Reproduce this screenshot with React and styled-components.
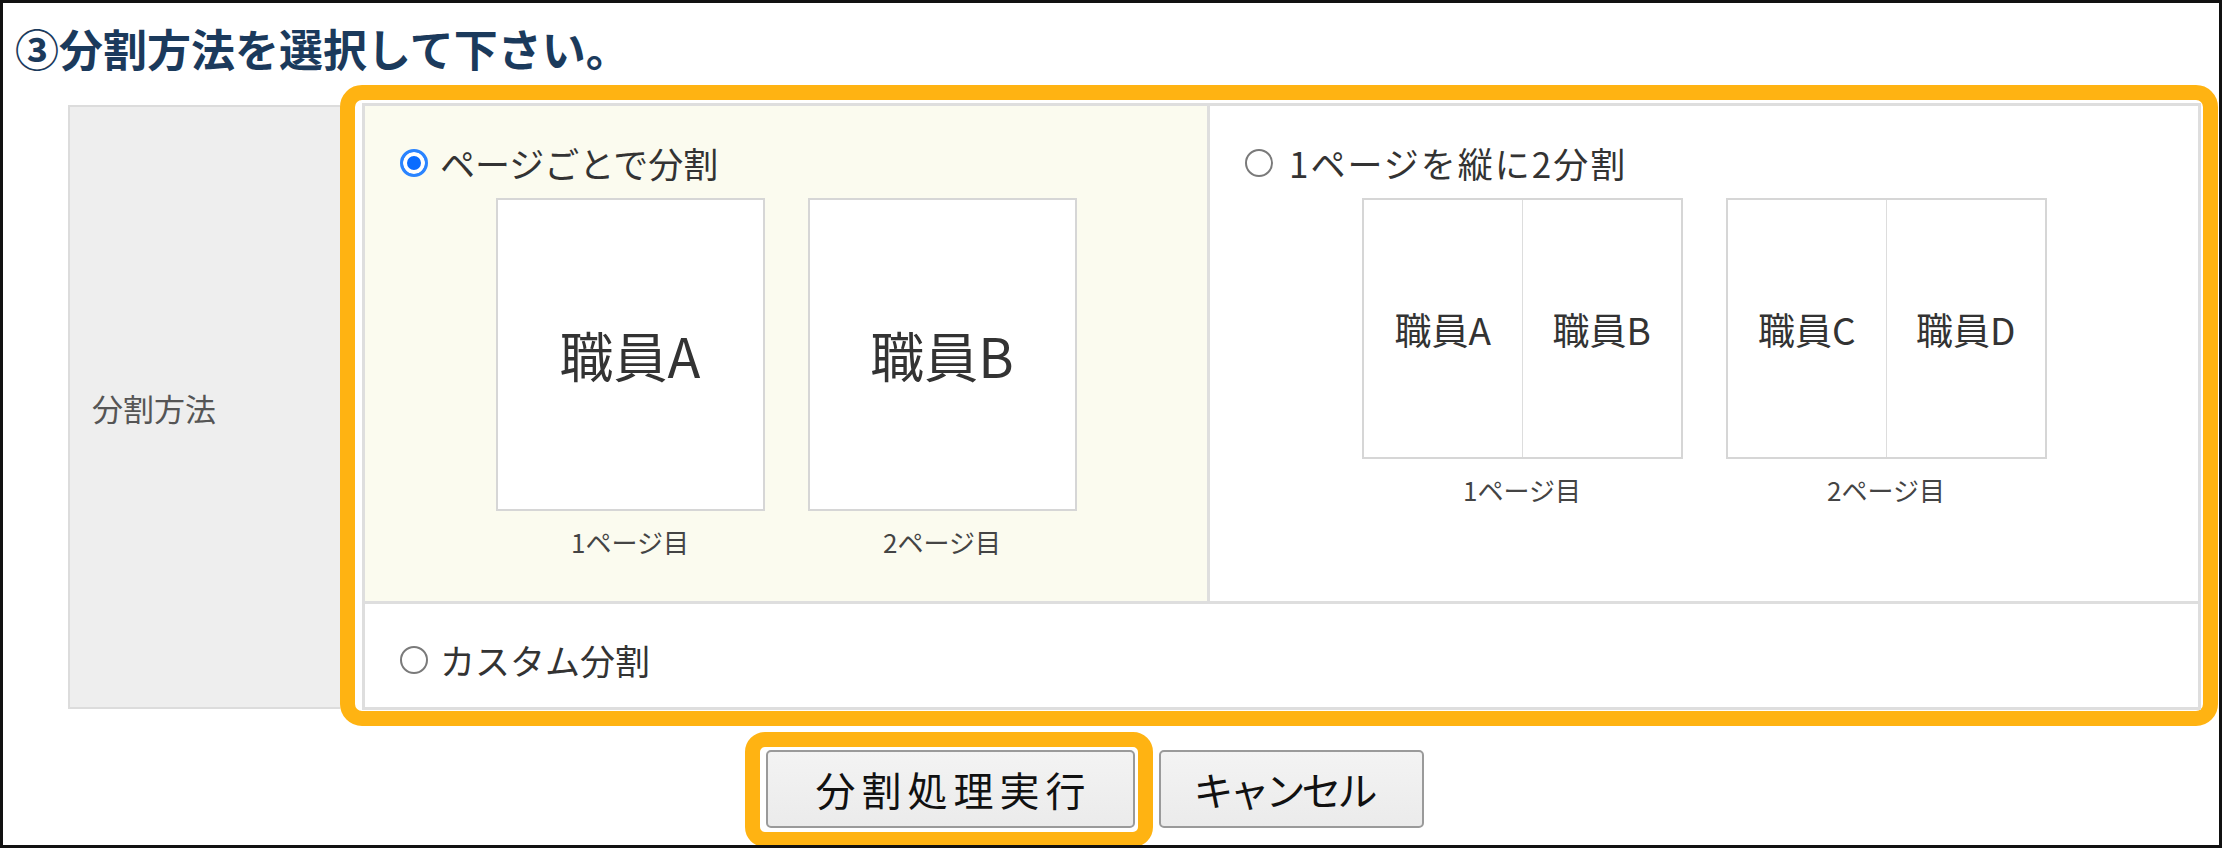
import React from 'react';
import styled, { createGlobalStyle } from 'styled-components';

const GlobalStyle = createGlobalStyle`
  html, body {
    margin: 0;
    padding: 0;
    background: #fff;
  }
  body {
    font-family: "Noto Sans CJK JP", "Noto Sans", sans-serif;
    color: #333;
  }
`;

const Frame = styled.div`
  width: 2222px;
  height: 848px;
  box-sizing: border-box;
  border: 3px solid #111;
  background: #fff;
  overflow: hidden;
`;

const Title = styled.h2`
  margin: 0;
  padding: 23px 0 0 12px;
  font-size: 44px;
  line-height: 44px;
  font-weight: 700;
  color: #1b3a5c;
`;

const FormRow = styled.div`
  display: flex;
  margin: 15px 0 0 65px;
`;

const LabelCell = styled.div`
  flex: none;
  width: 272px;
  box-sizing: border-box;
  margin: 20px 0 17px;
  padding-left: 22px;
  display: flex;
  align-items: center;
  background: #eeeeee;
  border: 2px solid #dcdcdc;
  border-right: none;
  font-size: 31px;
  color: #555;
`;

const Highlight = styled.div`
  flex: none;
  box-sizing: border-box;
  border: 15px solid #ffb312;
  border-radius: 22px;
  background: #fff;
`;

const FieldHighlight = styled(Highlight)`
  width: 1878px;
  padding: 3px 2px 1px 7px;
`;

const OptionTable = styled.div`
  display: grid;
  grid-template-columns: 845px 1fr;
  border: 3px solid #dedede;
`;

const OptionCell = styled.div`
  padding: 35px 35px 42px;
  background: ${(p) => (p.$selected ? '#fbfbef' : '#fff')};
  border-right: ${(p) => (p.$divider ? '3px solid #dedede' : 'none')};
`;

const WideCell = styled.div`
  grid-column: 1 / -1;
  padding: 34px 35px 25px;
  border-top: 3px solid #dedede;
  background: #fff;
`;

const OptionLabel = styled.label`
  display: flex;
  align-items: center;
  gap: ${(p) => (p.$wide ? 16 : 12)}px;
  font-size: 35px;
  line-height: 44px;
  letter-spacing: ${(p) => (p.$wide ? 2 : 0)}px;
  color: #333;
`;

const Radio = styled.span`
  flex: none;
  width: 28px;
  height: 28px;
  box-sizing: border-box;
  border-radius: 50%;
  border: ${(p) => (p.$checked ? '3px solid #2a84ff' : '2.5px solid #7a7a7a')};
  background: ${(p) => (p.$checked ? '#0a6cff' : '#fff')};
  box-shadow: ${(p) => (p.$checked ? 'inset 0 0 0 4px #fff' : 'none')};
`;

const PageRow = styled.div`
  display: flex;
  justify-content: center;
  gap: 43px;
  margin-top: 13px;
`;

const PageItem = styled.div`
  display: flex;
  flex-direction: column;
  align-items: center;
  gap: 14px;
`;

const Page = styled.div`
  width: 269px;
  height: 313px;
  box-sizing: border-box;
  border: 2px solid #d6d6d6;
  background: #fff;
  display: flex;
  align-items: center;
  justify-content: center;
  font-size: 54px;
  color: #333;
`;

const SplitPage = styled.div`
  width: 321px;
  height: 261px;
  box-sizing: border-box;
  border: 2px solid #d6d6d6;
  background: #fff;
  display: grid;
  grid-template-columns: 1fr 1fr;
`;

const Half = styled.div`
  display: flex;
  align-items: center;
  justify-content: center;
  font-size: 37px;
  color: #333;
  & + & {
    border-left: 1px solid #dddddd;
  }
`;

const PageCaption = styled.div`
  font-size: 26px;
  line-height: 34px;
  color: #444;
`;

const ButtonRow = styled.div`
  display: flex;
  align-items: flex-start;
  margin: 6px 0 0 742px;
`;

const ButtonHighlight = styled(Highlight)`
  padding: 3px 3px 4px 6px;
  border-radius: 20px;
`;

const Button = styled.button`
  box-sizing: border-box;
  width: ${(p) => p.$width}px;
  height: 78px;
  margin: 0;
  padding: 0 ${(p) => p.$padRight}px 0 ${(p) => p.$padLeft}px;
  border: 2px solid #9a9a9a;
  border-radius: 5px;
  background: linear-gradient(#f3f3f3, #ebebeb);
  font-family: inherit;
  font-size: 40px;
  letter-spacing: ${(p) => p.$spacing}px;
  color: #111;
`;

const CancelButton = styled(Button)`
  margin: 18px 0 0 6px;
`;

export default function App() {
  return (
    <>
      <GlobalStyle />
      <Frame>
        <Title>③分割方法を選択して下さい。</Title>
        <FormRow>
          <LabelCell>分割方法</LabelCell>
          <FieldHighlight>
            <OptionTable>
              <OptionCell $selected $divider>
                <OptionLabel>
                  <Radio $checked />
                  ページごとで分割
                </OptionLabel>
                <PageRow>
                  <PageItem>
                    <Page>職員A</Page>
                    <PageCaption>1ページ目</PageCaption>
                  </PageItem>
                  <PageItem>
                    <Page>職員B</Page>
                    <PageCaption>2ページ目</PageCaption>
                  </PageItem>
                </PageRow>
              </OptionCell>
              <OptionCell>
                <OptionLabel $wide>
                  <Radio />
                  1ページを縦に2分割
                </OptionLabel>
                <PageRow>
                  <PageItem>
                    <SplitPage>
                      <Half>職員A</Half>
                      <Half>職員B</Half>
                    </SplitPage>
                    <PageCaption>1ページ目</PageCaption>
                  </PageItem>
                  <PageItem>
                    <SplitPage>
                      <Half>職員C</Half>
                      <Half>職員D</Half>
                    </SplitPage>
                    <PageCaption>2ページ目</PageCaption>
                  </PageItem>
                </PageRow>
              </OptionCell>
              <WideCell>
                <OptionLabel>
                  <Radio />
                  カスタム分割
                </OptionLabel>
              </WideCell>
            </OptionTable>
          </FieldHighlight>
        </FormRow>
        <ButtonRow>
          <ButtonHighlight>
            <Button $width={369} $spacing={6} $padLeft={6} $padRight={0}>
              分割処理実行
            </Button>
          </ButtonHighlight>
          <CancelButton $width={265} $spacing={-4} $padLeft={0} $padRight={16}>
            キャンセル
          </CancelButton>
        </ButtonRow>
      </Frame>
    </>
  );
}
